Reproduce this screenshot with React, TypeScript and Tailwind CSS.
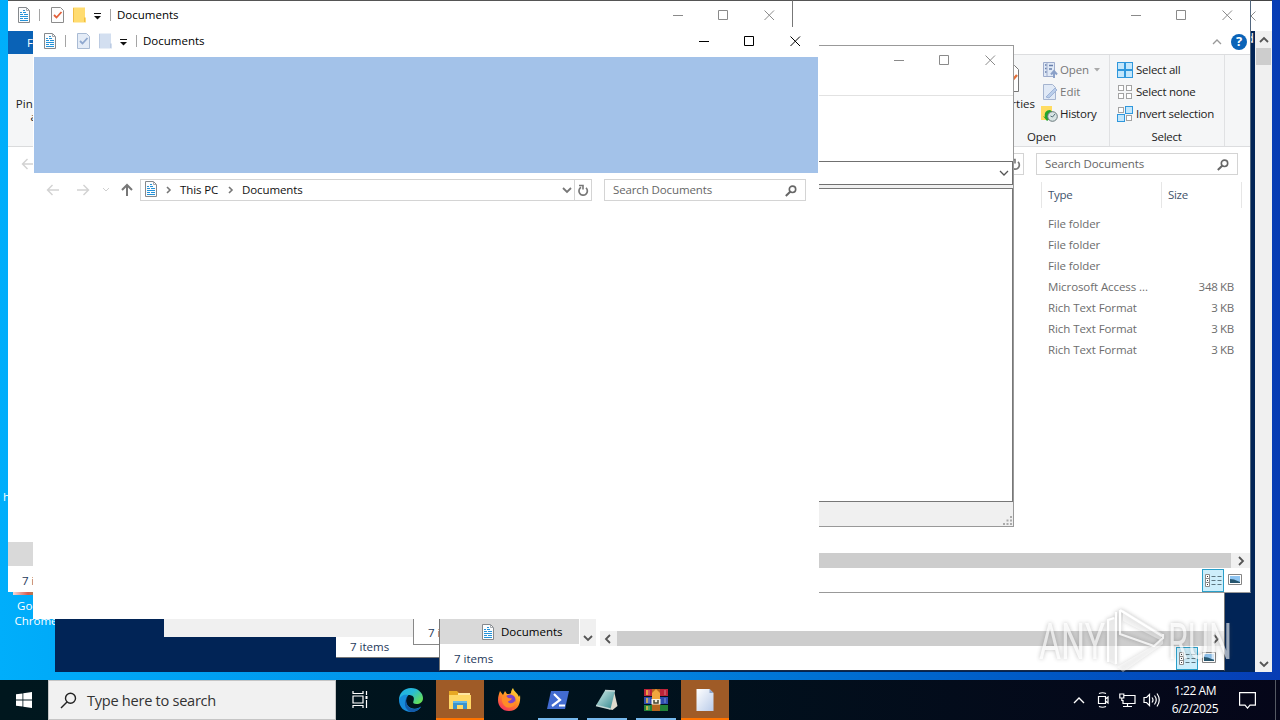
import type { ReactNode } from "react";

function DocIcon() {
  return (
    <svg className="block shrink-0" width="14" height="16" viewBox="0 0 14 16">
      <path d="M1.500.5h8l3 3v12h-11z" fill="#fbfcfd" stroke="#85898d" />
      <path d="M9.500.5v3h3" fill="none" stroke="#a5a9ad" />
      <path d="M6 3.500h2M3 5.500h2M6 5.500h3M3 7.500h3M7 7.500h4M3 9.500h8M3 11.500h3M7 11.500h4M3 13.500h8" stroke="#2492d8" />
    </svg>
  );
}

function CheckIcon({ faded = false }: { faded?: boolean }) {
  return (
    <svg className="block shrink-0" width="13" height="16" viewBox="0 0 13 16">
      <path d="M.5.5h9l3 3v12H.5z" fill={faded ? "#e4ecf7" : "#fdfdfd"} stroke={faded ? "#a9bbd4" : "#8c8c8c"} />
      <path d="M3 8l2.500 2.500 5-5.500" fill="none" stroke={faded ? "#8fa8cf" : "#e2603a"} strokeWidth="1.800" />
    </svg>
  );
}

function FolderIcon({ faded = false }: { faded?: boolean }) {
  return (
    <svg className="block shrink-0" width="13" height="16" viewBox="0 0 13 16">
      <path d="M0 .5h12v10h1v5H0z" fill={faded ? "#d3dff0" : "#ffdc70"} />
      <path d="M11.500 10.500V15M.5 1v14" stroke={faded ? "#bccbe2" : "#f0bd45"} />
    </svg>
  );
}

function QuickAccess({ faded = false }: { faded?: boolean }) {
  return (
    <div className="flex items-center">
      <DocIcon />
      <i className="ml-[8px] h-[12px] w-px bg-[#a5a5a5]" />
      <span className="ml-[11px]"><CheckIcon faded={faded} /></span>
      <span className="ml-[9px]"><FolderIcon faded={faded} /></span>
      <svg className="ml-[7px] mt-[3px]" width="9" height="7" viewBox="0 0 9 7">
        <path d="M1 .5h7" stroke="#111" />
        <path d="M1 3h7L4.500 6.500z" fill="#111" />
      </svg>
      <i className="ml-[8px] h-[12px] w-px bg-[#a5a5a5]" />
      <span className="ml-[6px] text-black">Documents</span>
    </div>
  );
}

function TitleBar({ active = false, children }: { active?: boolean; children?: ReactNode }) {
  const c = active ? "#000" : "#8a8a8a";
  return (
    <div className={`flex h-[28px] shrink-0 items-center bg-white pl-[9px] ${active ? "pr-[18px]" : "pr-[17px]"}`}>
      {children}
      <svg className="ml-auto shrink-0" width="102" height="11" viewBox="0 0 102 11" fill="none" stroke={c}>
        <path d="M0 5.500h10M45.500.5h9v9h-9zM91.500.5l9.500 9.500M101 .5L91.500 10" />
      </svg>
    </div>
  );
}

function Chevron({ dir, color = "#555", width = 1.8 }: { dir: "up" | "down" | "left" | "right"; color?: string; width?: number }) {
  const d = { up: "M1 7l4-4 4 4", down: "M1 3l4 4 4-4", left: "M7 1L3 5l4 4", right: "M3 1l4 4-4 4" }[dir];
  return (
    <svg className="block shrink-0" width="10" height="10" viewBox="0 0 10 10">
      <path d={d} fill="none" stroke={color} strokeWidth={width} />
    </svg>
  );
}

function Arrow({ dir, color = "#d2d2d2" }: { dir: "left" | "right" | "up"; color?: string }) {
  const d = {
    left: "M13 7H1.500M6.500 2L1.500 7l5 5",
    right: "M1 7h11.500M7.500 2l5 5-5 5",
    up: "M7 13V2M2 7l5-5 5 5",
  }[dir];
  return (
    <svg className="block shrink-0" width="14" height="14" viewBox="0 0 14 14">
      <path d={d} fill="none" stroke={color} strokeWidth={dir === "up" ? 2 : 1.4} />
    </svg>
  );
}

function Refresh() {
  return (
    <svg className="block shrink-0" width="12" height="13" viewBox="0 0 12 13">
      <path d="M9 3.800A4.200 4.200 0 1 1 4 3.300" fill="none" stroke="#777" strokeWidth="1.700" />
      <path d="M2 1.500h4v4" fill="none" stroke="#777" strokeWidth="1.600" />
    </svg>
  );
}

function SearchBox() {
  return (
    <div className="flex h-[22px] w-[202px] shrink-0 items-center justify-between border border-[#d4d4d4] bg-white pl-[8px] pr-[8px]">
      <span className="tracking-[-0.12px] text-[#666]">Search Documents</span>
      <svg className="mt-[2px]" width="12" height="12" viewBox="0 0 12 12" fill="none" stroke="#666">
        <circle cx="7.500" cy="4.300" r="3.200" strokeWidth="1.600" />
        <path d="M5.200 6.700L.8 11" strokeWidth="2" />
      </svg>
    </div>
  );
}

function DetailsIcon() {
  return (
    <div className="flex h-[23px] w-[22px] items-center justify-center border border-[#2a9fc9] bg-[#cdeefb]">
      <svg width="17" height="13" viewBox="0 0 17 13">
        <path d="M.5.500h4v12h-4zM.5 4.500h4M.5 8.500h4" fill="#fff" stroke="#8c8c8c" />
        <path d="M2 2.500h1M2 6.500h1M2 10.500h1" stroke="#333" />
        <path d="M6.500 2.500h4M12.500 2.500h4M6.500 6.500h4M12.500 6.500h4M6.500 10.500h4M12.500 10.500h4" stroke="#5d7680" />
      </svg>
    </div>
  );
}

function PictureIcon() {
  return (
    <svg className="mb-[2px] block" width="14" height="11" viewBox="0 0 14 11">
      <path d="M.5.5h13v10H.5z" fill="#fff" stroke="#858585" />
      <path d="M2 2h10v7H2z" fill="#8fc5f2" />
      <path d="M2 5l4 .5 6 2.500v1H2z" fill="#27566f" />
    </svg>
  );
}

function ViewButtons() {
  return (
    <div className="flex items-center gap-[4px]">
      <DetailsIcon />
      <PictureIcon />
    </div>
  );
}

function Tiles({ filled }: { filled: boolean[] }) {
  return (
    <svg className="block shrink-0" width="16" height="16" viewBox="0 0 16 16">
      {filled.map((on, i) => {
        const x = (i % 2) * 8;
        const y = Math.floor(i / 2) * 8;
        return on ? (
          <rect key={i} x={x + 0.5} y={y + 0.5} width="7" height="7" fill="#c3e7fc" stroke="#2f97dc" />
        ) : (
          <rect key={i} x={x + 1.5} y={y + 1.5} width="5" height="5" fill="#fff" stroke="#a3a3a3" />
        );
      })}
    </svg>
  );
}

function ConsoleWindow() {
  return (
    <div className="absolute left-[55px] top-0 flex h-[672px] w-[1217px] flex-col border-t border-[#444] bg-[#012456]">
      <div className="flex h-[30px] items-center bg-white">
        <svg className="ml-auto mr-[16px]" width="10" height="10" viewBox="0 0 10 10">
          <path d="M.5.5l9 9M9.500.5l-9 9" stroke="#8a8a8a" />
        </svg>
      </div>
      <div className="flex flex-1 justify-end">
        <span className="mr-[1px] text-[13px] leading-[14px] text-white">d</span>
        <div className="flex w-[17px] flex-col items-center bg-[#f0f0f0] pb-[3px] pt-[4px]">
          <Chevron dir="up" />
          <div className="mt-[3px] h-[17px] w-[15px] bg-[#cdcdcd]" />
          <div className="mt-auto"><Chevron dir="down" /></div>
        </div>
      </div>
    </div>
  );
}

function LowerWindows() {
  return (
    <>
      <div className="absolute left-[336px] top-[560px] flex h-[98px] w-[784px] items-end border-b border-[#777] bg-white pb-[2px] pl-[14px] text-[#1e395b]">
        7 items
      </div>
      <div className="absolute left-[164px] top-[560px] h-[77px] w-[250px] bg-[#f0f0f0]" />
      <div className="absolute left-[413px] top-[560px] flex h-[85px] w-[500px] items-end border-b border-l border-[#888] bg-white pb-[3px] pl-[14px] text-[#1e395b]">
        7 items
      </div>
      <div className="absolute left-[439px] top-[560px] flex h-[111px] w-[786px] flex-col justify-end border border-[#777] border-b-[#1a2a44] bg-white">
        <div className="flex h-[28px] shrink-0 items-stretch">
          <div className="flex h-[26px] w-[139px] items-center bg-[#d9d9d9] pl-[41px] pt-[2px] text-black">
            <DocIcon />
            <span className="ml-[6px]">Documents</span>
          </div>
          <div className="ml-px flex h-[28px] w-[16px] items-end justify-center bg-[#f0f0f0] pb-[3px] pr-px">
            <Chevron dir="down" />
          </div>
          <div className="ml-[4px] mt-[13px] flex h-[15px] flex-1 items-center bg-[#f0f0f0]">
            <div className="flex w-[17px] justify-center pr-px"><Chevron dir="left" /></div>
            <div className="h-full flex-1 bg-[#cdcdcd]" />
            <div className="flex w-[17px] justify-center"><Chevron dir="right" /></div>
          </div>
        </div>
        <div className="flex h-[24px] shrink-0 items-center justify-between pl-[14px] pr-[8px] text-[#1e395b]">
          <span className="mt-px">7 items</span>
          <ViewButtons />
        </div>
      </div>
    </>
  );
}

const files = [
  ["File folder", ""],
  ["File folder", ""],
  ["File folder", ""],
  ["Microsoft Access ...", "348 KB"],
  ["Rich Text Format", "3 KB"],
  ["Rich Text Format", "3 KB"],
  ["Rich Text Format", "3 KB"],
];

function RightExplorer() {
  return (
    <div className="absolute left-[467px] top-0 flex h-[593px] w-[784px] flex-col border-b border-r border-t border-b-[#999] border-r-[#52677f] border-t-[#555] bg-white">
      <TitleBar />
      <div className="flex h-[25px] shrink-0 items-center justify-end gap-[9px] pr-[3px]">
        <Chevron dir="up" color="#999" width={1.3} />
        <span className="flex size-[16px] items-center justify-center rounded-full bg-[#0a63b8] text-[13px] font-bold leading-none text-white">?</span>
      </div>
      <div className="flex h-[93px] shrink-0 border-y border-[#dcdddf] bg-[#f5f6f7] pl-[534px] text-[#222]">
        <div className="flex w-[109px] flex-col border-r border-[#e0e1e3]">
          <div className="flex h-[72px] pt-[4px]">
            <div className="flex w-[36px] flex-col items-end">
              <svg className="mr-[18px] mt-[6px]" width="17" height="27" viewBox="0 0 17 27">
                <path d="M.5.5h12l4 4v22H.5z" fill="#fff" stroke="#777" />
                <path d="M4 14l4 4 7-8" fill="none" stroke="#e2703a" strokeWidth="2.500" />
              </svg>
              <span className="mr-[2px] mt-[4px] whitespace-nowrap leading-[16px]">Properties</span>
            </div>
            <div className="flex flex-col pl-[5px]">
              <div className="flex h-[22px] items-center text-[#777]">
                <svg width="16" height="16" viewBox="0 0 16 16">
                  <path d="M1.500.5h11v14h-11z" fill="#e0e9f6" stroke="#9eaccc" />
                  <path d="M5 1v13" stroke="#9eaccc" />
                  <path d="M3 3h1.500M3 6.500h1.500M3 10h1.500M7 3.500h4M7 7h3" stroke="#6880ac" strokeWidth="1.500" />
                  <path d="M12 16v-6M9 12.500L12 9l3 3.500" stroke="#8aa0c8" strokeWidth="2" fill="none" />
                </svg>
                <span className="ml-[2px] tracking-[-0.15px]">Open</span>
                <svg className="ml-[5px]" width="6" height="4" viewBox="0 0 6 4"><path d="M0 0h6L3 3.500z" fill="#aaa" /></svg>
              </div>
              <div className="flex h-[22px] items-center text-[#777]">
                <svg width="16" height="16" viewBox="0 0 16 16">
                  <path d="M1.500.5h9l3 3v12h-12z" fill="#e0e9f6" stroke="#a5b4cf" />
                  <path d="M4 13l9-9 2 2-8 8z" fill="#b9cdea" stroke="#93a9d0" strokeWidth=".8" />
                </svg>
                <span className="ml-[2px]">Edit</span>
              </div>
              <div className="flex h-[22px] items-center">
                <svg className="-ml-[1px]" width="17" height="16" viewBox="0 0 17 16">
                  <path d="M0 0h11v14H0z" fill="#ffdc62" />
                  <path d="M9 4C5 4 3 7 4 11l-2-1 4 5 4-3-2-1c-1-3 1-5 4-5z" fill="#22a52a" />
                  <circle cx="11.500" cy="10.500" r="4.800" fill="#d8e4e4" stroke="#68787b" />
                  <path d="M14 8l-2.500 3-2-1" fill="none" stroke="#55707a" />
                </svg>
                <span className="ml-[2px] tracking-[-0.25px]">History</span>
              </div>
            </div>
          </div>
          <span className="ml-[26px] mt-[2px] leading-[16px] tracking-[-0.15px]">Open</span>
        </div>
        <div className="flex w-[115px] flex-col border-r border-[#e0e1e3] tracking-[-0.25px]">
          <div className="flex h-[72px] flex-col pl-[7px] pt-[4px]">
            <div className="flex h-[22px] items-center gap-[3px]"><Tiles filled={[true, true, true, true]} />Select all</div>
            <div className="flex h-[22px] items-center gap-[3px]"><Tiles filled={[false, false, false, false]} />Select none</div>
            <div className="flex h-[22px] items-center gap-[3px] whitespace-nowrap"><Tiles filled={[false, true, true, false]} />Invert selection</div>
          </div>
          <span className="mt-[2px] pr-px text-center leading-[16px]">Select</span>
        </div>
      </div>
      <div className="flex h-[34px] shrink-0 items-center justify-end gap-[12px] pr-[12px]">
        <div className="flex h-[22px] w-[400px] items-center justify-end border border-[#d4d4d4] pr-[2px]"><Refresh /></div>
        <SearchBox />
      </div>
      <div className="flex h-[28px] shrink-0 items-center justify-end pr-[8px] text-[#42536b]">
        <div className="flex h-[26px] w-[120px] items-center border-l border-[#e6e6e6] pl-[6px] tracking-[-0.3px]">Type</div>
        <div className="flex h-[26px] w-[81px] items-center border-x border-[#e6e6e6] pl-[6px] tracking-[-0.3px]">Size</div>
      </div>
      <div className="mt-[4px] flex shrink-0 flex-col items-end pr-[16px] text-[#6d6d6d]">
        {files.map(([type, size], i) => (
          <div key={i} className="flex h-[21px] w-[186px] items-center justify-between">
            <span className="tracking-[-0.08px]">{type}</span>
            <span className="tracking-[-0.3px]">{size}</span>
          </div>
        ))}
      </div>
      <div className="mt-auto flex h-[15px] shrink-0 items-center bg-[#f0f0f0]">
        <div className="h-full flex-1 bg-[#cdcdcd]" />
        <div className="flex w-[19px] justify-center pl-px"><Chevron dir="right" /></div>
      </div>
      <div className="flex h-[24px] shrink-0 items-center justify-end pr-[8px]">
        <ViewButtons />
      </div>
    </div>
  );
}

function LeftExplorer() {
  return (
    <div className="absolute left-[8px] top-0 flex h-[592px] w-[785px] flex-col border-r border-t border-r-[#777] border-t-[#555] bg-white">
      <TitleBar><QuickAccess /></TitleBar>
      <div className="mt-[2px] flex h-[23px] w-[56px] shrink-0 items-center justify-center bg-[#0a62b6] text-white">File</div>
      <div className="flex h-[93px] shrink-0 flex-col border-b border-[#dadbdc] bg-[#f5f6f7] pl-[7px] pt-[43px] text-[#222]">
        <div className="w-[66px] text-center leading-[13px]">Pin to Quick access</div>
      </div>
      <div className="flex h-[34px] shrink-0 items-center pl-[13px]"><Arrow dir="left" /></div>
      <div className="mt-auto h-[24px] w-[139px] shrink-0 bg-[#d9d9d9]" />
      <div className="flex h-[26px] shrink-0 items-center pl-[14px] pt-[3px] text-[#1e395b]">7 items</div>
    </div>
  );
}

function DialogWindow() {
  return (
    <div className="absolute left-[500px] top-[45px] flex h-[482px] w-[514px] flex-col border border-[#999] bg-white">
      <TitleBar />
      <div className="mt-[21px] h-px shrink-0 bg-[#e2e2e2]" />
      <div className="mt-[65px] flex h-[24px] shrink-0 items-center justify-end border border-[#707070] pr-[3px]">
        <Chevron dir="down" color="#555" width={1.3} />
      </div>
      <div className="h-[3px] shrink-0 bg-[#f0f0f0]" />
      <div className="h-[314px] shrink-0 border border-[#777]" />
      <div className="flex flex-1 items-end justify-end bg-[#f0f0f0] pb-px pr-px">
        <svg width="9" height="9" viewBox="0 0 9 9" fill="#aaa">
          <path d="M7 0h2v2H7zM3.500 3.500h2v2h-2zM7 3.500h2v2H7zM0 7h2v2H0zM3.500 7h2v2h-2zM7 7h2v2H7z" />
        </svg>
      </div>
    </div>
  );
}

function FrontExplorer() {
  return (
    <div className="absolute left-[33px] top-[27px] flex h-[592px] w-[786px] flex-col bg-white">
      <TitleBar active><div className="pl-px"><QuickAccess faded /></div></TitleBar>
      <div className="mx-px mt-[2px] h-[116px] shrink-0 bg-[#a3c2e9]" />
      <div className="flex h-[34px] shrink-0 items-center pl-[13px]">
        <Arrow dir="left" />
        <span className="ml-[16px]"><Arrow dir="right" /></span>
        <span className="ml-[12px] mr-[10px]">
          <svg className="block" width="8" height="6" viewBox="0 0 8 6"><path d="M1 1l3 3 3-3" fill="none" stroke="#cfcfcf" /></svg>
        </span>
        <Arrow dir="up" color="#777" />
        <div className="ml-[6px] flex h-[22px] w-[452px] shrink-0 items-center border border-[#d4d4d4] pl-[3px] text-[#111]">
          <div className="pb-[2px]"><DocIcon /></div>
          <svg className="ml-[8px]" width="6" height="8" viewBox="0 0 6 8"><path d="M1 1l3 3-3 3" fill="none" stroke="#777" strokeWidth="1.600" /></svg>
          <span className="ml-[8px] w-[39px] whitespace-nowrap tracking-[-0.1px]">This PC</span>
          <svg className="ml-[9px]" width="6" height="8" viewBox="0 0 6 8"><path d="M1 1l3 3-3 3" fill="none" stroke="#777" strokeWidth="1.600" /></svg>
          <span className="ml-[8px] tracking-[-0.1px]">Documents</span>
          <span className="ml-auto mr-[2px]"><Chevron dir="down" color="#777" /></span>
          <div className="flex h-full w-[17px] items-center justify-center border-l border-[#d4d4d4]"><Refresh /></div>
        </div>
        <span className="ml-[12px]"><SearchBox /></span>
      </div>
    </div>
  );
}

function Watermark() {
  return (
    <svg className="absolute left-[1030px] top-[600px] overflow-visible drop-shadow-[0_0_2px_rgba(70,70,70,0.55)]" width="230" height="80" viewBox="0 0 230 80" opacity=".72">
      <text x="9" y="59" fontFamily="Roboto" fontSize="50" textLength="66" lengthAdjust="spacingAndGlyphs" fill="#fff" fillOpacity=".85">ANY</text>
      <text x="138" y="59" fontFamily="Roboto" fontSize="50" textLength="64" lengthAdjust="spacingAndGlyphs" fill="#fff" fillOpacity=".85">RUN</text>
      <path d="M90 10l42 26M90 10v24l34 12 9-8v-4M78 62V20l6-2M86 64V12" fill="none" stroke="#fff" strokeWidth="2.200" />
      <path d="M93 10l40 24-3 6-37-19zM87 67l46-27v4L93 72zM78 19l8-2v48l-8-4z" fill="#fff" fillOpacity=".55" />
    </svg>
  );
}

function EdgeIcon() {
  return (
    <svg width="26" height="26" viewBox="0 0 26 26">
      <defs>
        <linearGradient id="edgeA" x1="0" x2="1" y2=".7"><stop stopColor="#1faee8" /><stop offset=".5" stopColor="#27bad7" /><stop offset="1" stopColor="#65df57" /></linearGradient>
      </defs>
      <path d="M1 13C1 6 6 1 13 1c7 0 12 5 12 10 0 4-3 6-6.500 6-3 0-4-1-3-3 1.500-4-1-6-5-6C6 8 2 10 1 15z" fill="url(#edgeA)" />
      <path d="M1 13c1-4 5-6 9.500-5C6 12 8 19 13 21c4 1.500 7 .5 10-1.500-2 4-6 5.500-10 5.500C6 25 1 20 1 13z" fill="#168bd9" />
      <path d="M10 9c-4 5-1 12 5 13 3 .5 6-.5 8-2.500-2 4-6 5.500-10 5.500C6 23 5 14 10 9z" fill="#135aa9" />
    </svg>
  );
}

function ExplorerIcon() {
  return (
    <svg width="24" height="22" viewBox="0 0 24 22">
      <path d="M1 2h8l2 2h11v5H1z" fill="#e8a823" />
      <path d="M10 4h12v3H10z" fill="#ffe6a0" />
      <path d="M1 6h22v14H1z" fill="#ffd765" />
      <path d="M5 20v-8h14v8h-4v-4H9v4z" fill="#3a93cd" />
      <path d="M5 12h14v2H5z" fill="#63b8e8" />
    </svg>
  );
}

function FirefoxIcon() {
  return (
    <svg width="24" height="25" viewBox="0 0 24 25">
      <defs>
        <linearGradient id="fox" x1=".8" y1="0" x2=".2" y2="1"><stop stopColor="#ffdf39" /><stop offset=".5" stopColor="#ff8b22" /><stop offset="1" stopColor="#f52b64" /></linearGradient>
      </defs>
      <path d="M3 4l3 4 2-4 2 3c2 0 3 0 4-1 0-2 1-4 2-5 1 4 5 5 6 9l1-2c1 8-2 16-11 16C5 24 1 19 1 13c0-4 1-6 2-9z" fill="url(#fox)" />
      <circle cx="13" cy="13" r="5.500" fill="#7b43c9" />
      <path d="M5 9c3-1 5 0 6 2l4 .5c-1 2-3 2-4 3 1 3 6 2 7-1 1 5-3 7-6 7-5 0-8-5-7-11.500z" fill="#ff8b28" />
    </svg>
  );
}

function PowerShellIcon() {
  return (
    <svg width="24" height="20" viewBox="0 0 24 20">
      <path d="M5 1h18l-4 18H1z" fill="#426bd0" />
      <path d="M8 4l6 6-8 6M13 15.500h6" fill="none" stroke="#fff" strokeWidth="2.200" />
    </svg>
  );
}

function NotepadIcon() {
  return (
    <svg width="24" height="24" viewBox="0 0 24 24">
      <defs><linearGradient id="note" x2="1" y2="1"><stop stopColor="#d5efeb" /><stop offset="1" stopColor="#2f858c" /></linearGradient></defs>
      <path d="M19 3l3.500 15-5 4-4-1z" fill="#dfdbcd" />
      <path d="M10 2.500l10 .5-4.500 18L1 17.500z" fill="url(#note)" />
      <path d="M10 2.500l10 .5M1 17.500L15.500 21" stroke="#c4d8d6" strokeWidth="1.400" />
    </svg>
  );
}

function ArchiveIcon() {
  return (
    <svg width="24" height="24" viewBox="0 0 24 24">
      <path d="M0 1h24v7H0z" fill="#bd2338" />
      <path d="M0 9h24v7H0z" fill="#2e4bad" />
      <path d="M0 17h24v6H0z" fill="#238238" />
      <path d="M3 2v5M3 10v5M3 18v4" stroke="#f3c445" strokeWidth="1.500" />
      <path d="M5 2v5M21 2v5M5 10v5M21 10v5M5 18v4" stroke="#ffffff66" />
      <path d="M8 1h8v22H8z" fill="#b5651e" />
      <path d="M8 5l4-4 4 4v6H8z" fill="#f1a63e" />
      <path d="M7.500 11h9v5.500h-9z" fill="#f7f0df" />
      <path d="M10 12v3h4v-3" fill="none" stroke="#443" strokeWidth="1.500" />
    </svg>
  );
}

function PageIcon() {
  return (
    <svg width="18" height="24" viewBox="0 0 18 24">
      <defs><linearGradient id="page" x2="1" y2="1"><stop stopColor="#fff" /><stop offset="1" stopColor="#b9cbe9" /></linearGradient></defs>
      <path d="M.5 1h13l4 4v18H.5z" fill="url(#page)" />
      <path d="M13.500 1v4h4z" fill="#8fa5c8" />
    </svg>
  );
}

function TaskButton({ children, state = "idle" }: { children: ReactNode; state?: "idle" | "running" | "attention" }) {
  const tone = { idle: "", running: "", attention: "bg-[#9f5b27]" }[state];
  const bar = { idle: "w-0", running: "w-[40px] bg-[#76b9ed]", attention: "w-full bg-[#ff7300]" }[state];
  return (
    <div className={`flex h-full w-[48px] shrink-0 flex-col items-center ${tone}`}>
      <div className="flex h-[38px] items-center justify-center pt-[1px]">{children}</div>
      <div className={`h-[2px] ${bar}`} />
    </div>
  );
}

function Taskbar() {
  return (
    <div className="absolute bottom-0 left-0 flex h-[40px] w-[1280px] items-center bg-linear-to-r from-[#00171e] via-[#00121d] to-[#050619]">
      <div className="flex h-full w-[48px] shrink-0 items-center justify-center">
        <svg width="16" height="16" viewBox="0 0 16 16" fill="#fff">
          <path d="M0 2.300L6.500 1.400V7.500H0zM7.300 1.200L16 0v7.500H7.300zM0 8.400h6.500v6.200L0 13.700zM7.300 8.400H16V16l-8.700-1.200z" />
        </svg>
      </div>
      <div className="flex h-full w-[288px] shrink-0 items-center border border-[#c5c5c5] bg-[#f1f1f1] pl-[11px]">
        <svg width="17" height="17" viewBox="0 0 17 17" fill="none" stroke="#222" strokeWidth="1.400">
          <circle cx="10.500" cy="6.300" r="5" />
          <path d="M7 10L1 16" />
        </svg>
        <span className="ml-[10px] text-[14.600px] tracking-[-0.28px] text-[#333]">Type here to search</span>
      </div>
      <div className="flex h-full shrink-0 gap-[1px]">
        <TaskButton>
          <svg width="17" height="17" viewBox="0 0 17 17" fill="none" stroke="#fff" strokeWidth="1.200">
            <path d="M1 0v2.500h10V0M1 5h10v7H1zM1 17v-2.500h10V17M14.500 0v4M14.500 9v8" />
            <path d="M13.500 5h2v3h-2z" fill="#fff" stroke="none" />
          </svg>
        </TaskButton>
        <div className="ml-[2px] flex h-full w-[48px] items-center justify-center">
          <EdgeIcon />
        </div>
        <TaskButton state="attention"><ExplorerIcon /></TaskButton>
        <TaskButton><FirefoxIcon /></TaskButton>
        <TaskButton state="running"><PowerShellIcon /></TaskButton>
        <TaskButton state="running"><NotepadIcon /></TaskButton>
        <TaskButton state="running"><ArchiveIcon /></TaskButton>
        <TaskButton state="attention"><PageIcon /></TaskButton>
      </div>
      <div className="ml-auto flex h-full items-center text-white">
        <svg width="12" height="8" viewBox="0 0 12 8"><path d="M1 7l5-5 5 5" fill="none" stroke="#fff" strokeWidth="1.400" /></svg>
        <svg className="ml-[12px]" width="13" height="16" viewBox="0 0 13 16" fill="none" stroke="#fff" strokeWidth="1.200">
          <path d="M1.500 4.500h7v7h-7zM8.500 7l2.500-2v6L8.500 9M2 1.500Q5.500 0 9 1.500M2 14.500Q5.500 16 9 14.500" />
        </svg>
        <svg className="ml-[9px]" width="17" height="15" viewBox="0 0 17 15" fill="none" stroke="#fff" strokeWidth="1.200">
          <path d="M5 2.500h11v8H4V7M4 13.500h9M8.500 10.500v3M.8 1h4v4h-4zM2.800 5v3" />
        </svg>
        <svg className="ml-[7px]" width="17" height="16" viewBox="0 0 17 16" fill="none" stroke="#fff" strokeWidth="1.200">
          <path d="M1 5.500h2.500L6.500 2.500v11l-3-3H1zM9 5.500q2 2.500 0 5M11.500 3.500q3.500 4.500 0 9M14 1.500q4.500 6.500 0 13" />
        </svg>
        <div className="ml-[7px] flex w-[56px] flex-col items-center whitespace-nowrap text-[12px] leading-[18px] tracking-[-0.45px]">
          <span>1:22 AM</span>
          <span>6/2/2025</span>
        </div>
        <svg className="ml-[16px]" width="17" height="17" viewBox="0 0 17 17" fill="none" stroke="#fff" strokeWidth="1.200">
          <path d="M.6.6h15.800v12.500H11l-2.500 3-2.500-3H.6z" />
        </svg>
        <i className="ml-[19px] mr-[4px] h-full w-px bg-[#555963]" />
      </div>
    </div>
  );
}

export default function App() {
  return (
    <div className="relative h-[720px] w-[1280px] overflow-hidden bg-linear-to-r from-[#00aefb] via-[#0484e0] to-[#073cb4] font-['Open_Sans','Noto_Sans',sans-serif] text-[11.500px] leading-[16px]">
      <div className="absolute left-[3px] top-[489px] text-white">h</div>
      <div className="absolute left-[8px] top-[592px] w-[56px] text-center leading-[15px] text-white">
        <div className="ml-[5px] h-[3px] w-[30px] bg-linear-to-r from-[#f4d8d8] via-[#d45b50] to-[#48a950]" />
        <div className="mt-[3px]">Google Chrome</div>
      </div>
      <ConsoleWindow />
      <LowerWindows />
      <RightExplorer />
      <LeftExplorer />
      <DialogWindow />
      <FrontExplorer />
      <Taskbar />
      <Watermark />
    </div>
  );
}
